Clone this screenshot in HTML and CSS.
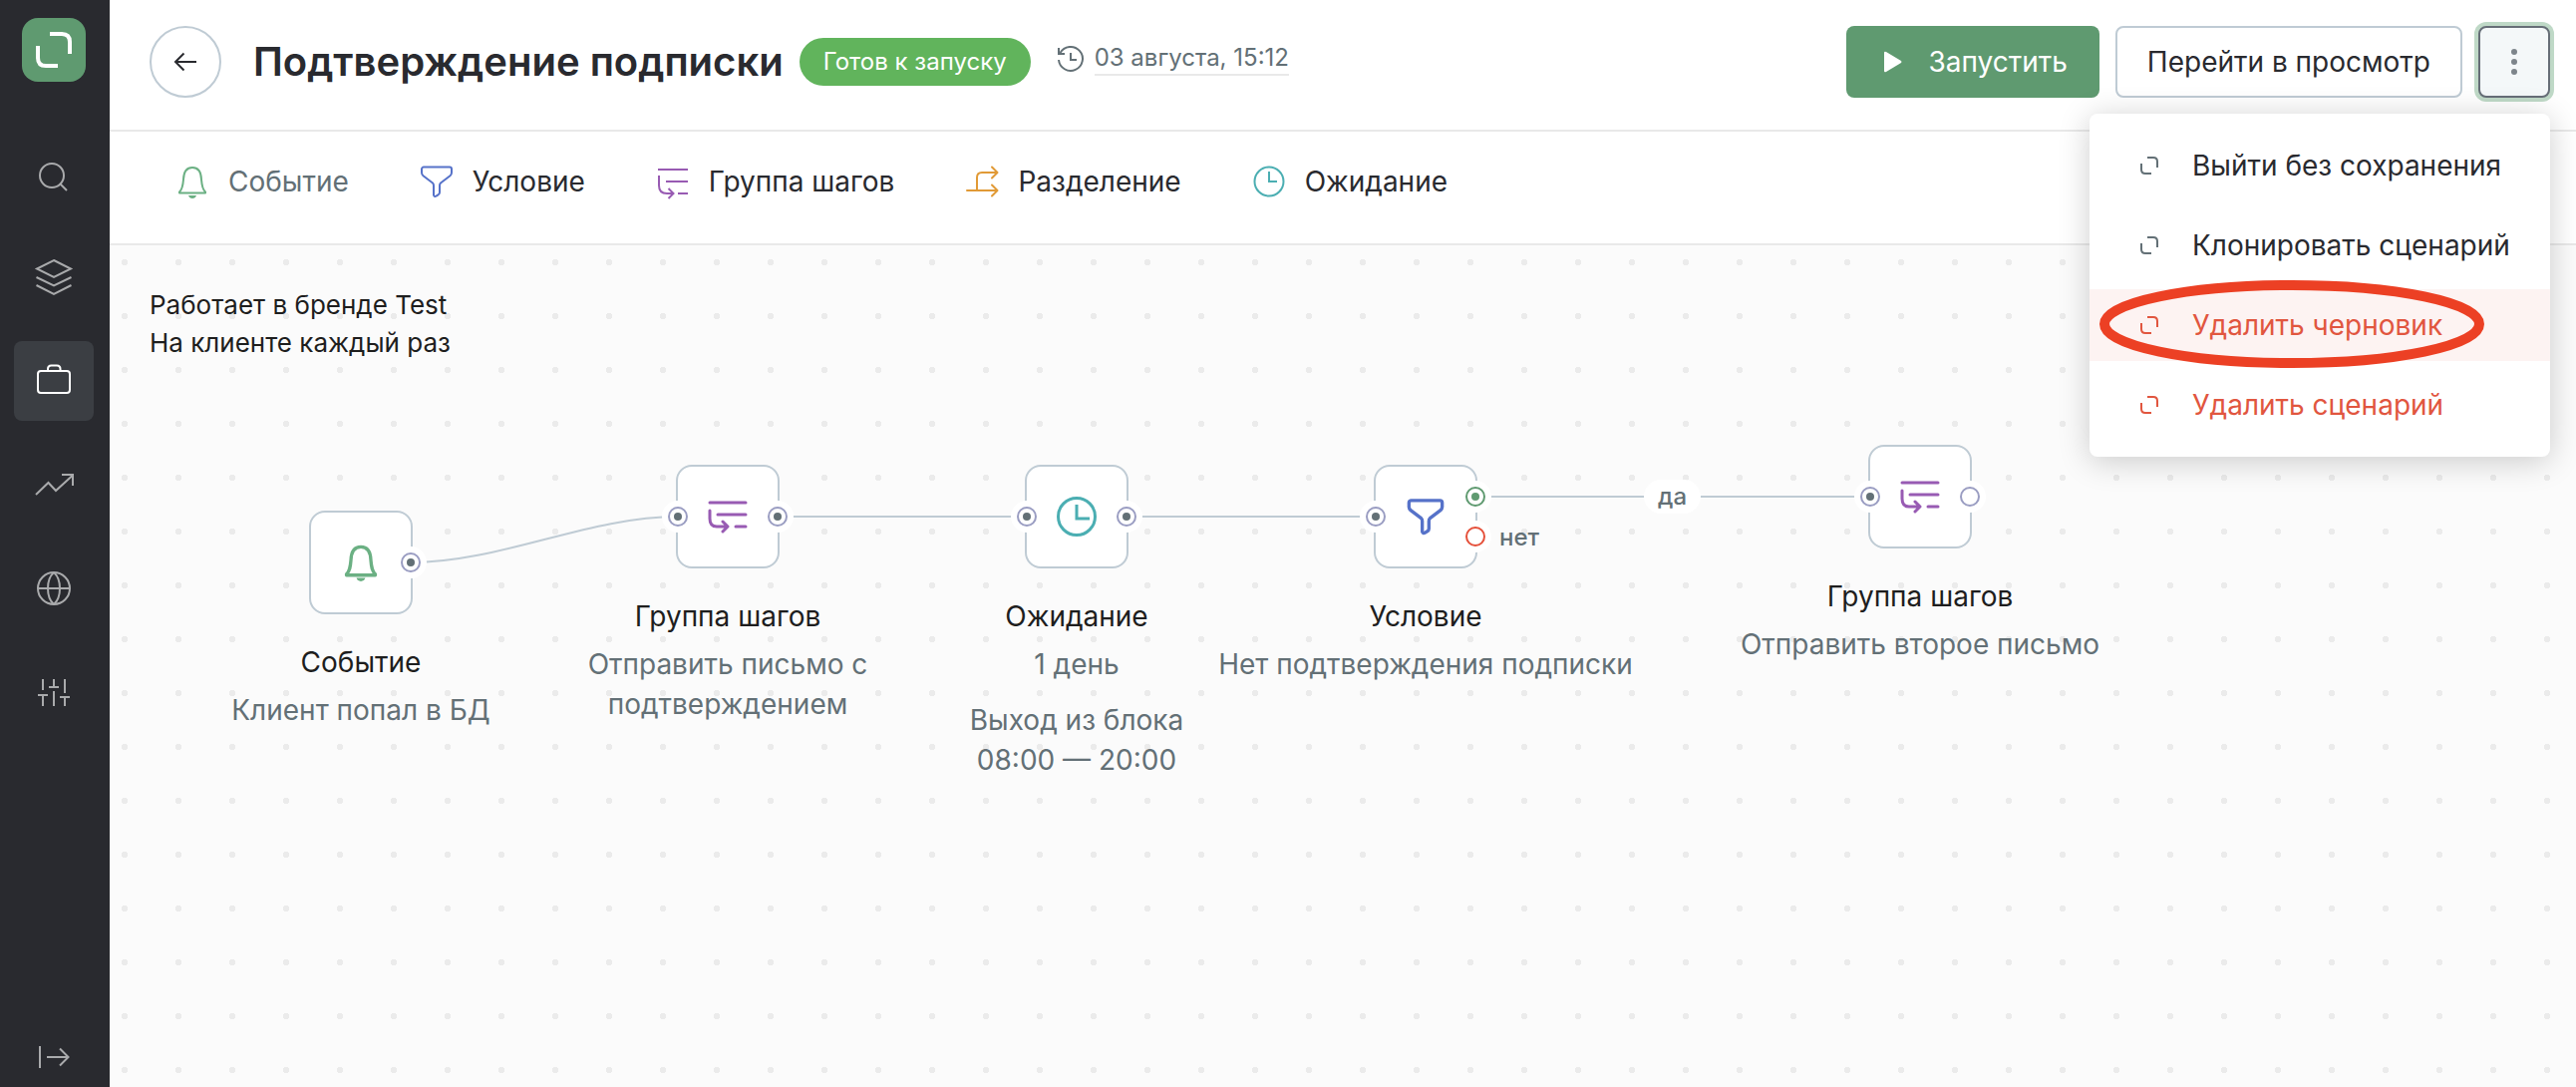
FILE: index.html
```html
<!DOCTYPE html>
<html lang="ru">
<head>
<meta charset="utf-8">
<title>Подтверждение подписки</title>
<meta name="viewport" content="width=device-width, initial-scale=1">
<link rel="stylesheet" href="styles.css">
</head>
<body>
<svg class="sprite" aria-hidden="true">
  <symbol id="i-bell" viewBox="0 0 36 36"><path d="M5 28.500 C8 26 8.500 22 9 16 C9.300 8 12 4 18 4 C24 4 26.700 8 27 16 C27.500 22 28 26 31 28.500 V29.500 H5 Z" fill="none" stroke="currentColor" stroke-linejoin="round"/><path d="M14 32 h8 c-.6 2 -2 3 -4 3 s-3.400 -1 -4 -3Z" fill="currentColor" stroke="none"/></symbol>
  <symbol id="i-funnel" viewBox="0 0 36 36"><path d="M5 3.500 H31 a2 2 0 0 1 2 2 V9 Q33 11 31.500 12.300 L22 19.500 Q21 20.500 21 22 V29 Q21 30.500 19.500 31.300 L17.500 32.600 Q15.500 33.500 15 31.500 V22 Q15 20.500 14 19.500 L4.500 12.300 Q3 11 3 9 V5.500 a2 2 0 0 1 2 -2Z" fill="none" stroke="currentColor" stroke-linejoin="round"/></symbol>
  <symbol id="i-group" viewBox="0 0 36 36"><path d="M3 6 H33 M11 18 H33 M23 30 H33 M4 12 V22 Q4 30 12 30 H18 M13.500 25 L18.500 30 L13.500 35" fill="none" stroke="currentColor"/></symbol>
  <symbol id="i-group-bold" viewBox="0 0 40 36"><path d="M2 4 H38 M10 16 H38 M28 28 H38 M2 12 V20 Q2 28 9 28 H19 M15 23 L20 28 L15 33" fill="none" stroke="currentColor" stroke-linecap="round" stroke-linejoin="round"/></symbol>
  <symbol id="i-split" viewBox="0 0 36 36"><path d="M3 27 H33 M13 27 V14 Q13 9 18 9 H33 M28 3.500 L33.500 9 L28 14.500 M28 21.500 L33.500 27 L28 32.500" fill="none" stroke="currentColor" stroke-linecap="round" stroke-linejoin="round"/></symbol>
  <symbol id="i-clock" viewBox="0 0 36 36"><circle cx="18" cy="18" r="14.500" fill="none" stroke="currentColor"/><path d="M18 8 V18 H26" fill="none" stroke="currentColor"/></symbol>
  <symbol id="i-clock-bold" viewBox="0 0 40 40"><circle cx="20" cy="20" r="18.500" fill="none" stroke="currentColor"/><path d="M20 8 V22 H33" fill="none" stroke="currentColor"/></symbol>
  <symbol id="i-corners" viewBox="0 0 18 18"><path d="M7 1 H13 Q17 1 17 5 V11 M1 7 V13 Q1 17 5 17 H11" fill="none" stroke="currentColor" stroke-width="2"/></symbol>
</svg>

<div class="app">
  <nav class="sidebar" aria-label="Главное меню">
    <a class="logo" href="#" aria-label="На главную">
      <svg viewBox="0 0 64 64"><path d="M28 16 H40 Q48 16 48 24 V36 M16 28 V40 Q16 48 24 48 H36" fill="none" stroke="currentColor" stroke-width="4"/></svg>
    </a>
    <div class="sidebar-links">
      <a class="side-link" href="#" aria-label="Поиск"><svg viewBox="0 0 40 40"><circle cx="18" cy="22" r="12" /><path d="M26 30 L33 37"/></svg></a>
      <a class="side-link" href="#" aria-label="Слои"><svg viewBox="0 0 40 40"><path d="M20 3 L37 11.500 L20 20 L3 11.500 Z M2.500 20 L20 28.500 L37.500 20 M2.500 28 L20 37 L37.500 28"/></svg></a>
      <a class="side-link side-link--active" href="#" aria-label="Кампании"><svg viewBox="0 0 40 40"><rect x="4" y="10" width="32" height="22" rx="3"/><path d="M14 10 V8 Q14 4.500 17.500 4.500 H23 Q26.500 4.500 26.500 8 V10"/></svg></a>
      <a class="side-link" href="#" aria-label="Отчёты"><svg viewBox="0 0 40 40"><path d="M2 30 L14.500 18 L22 26 L38.500 11 M28 10 H39 V21"/></svg></a>
      <a class="side-link" href="#" aria-label="Интеграции"><svg viewBox="0 0 40 40"><circle cx="20" cy="20" r="16"/><path d="M4 20 H36 M20 4 C12 11 12 29 20 36 M20 4 C28 11 28 29 20 36"/></svg></a>
      <a class="side-link" href="#" aria-label="Настройки"><svg viewBox="0 0 40 40"><path d="M9 7 V18 M4 23 H14 M9 23 V34 M20 7 V15 M15 15 H25 M20 19 V34 M31 7 V21 M26 25 H36 M31 25 V34"/></svg></a>
    </div>
    <a class="side-link side-link--expand" href="#" aria-label="Развернуть меню"><svg viewBox="0 0 40 40"><path d="M6 9 V31 M13 20 H34 M26 11.500 L34.500 20 L26 28.500"/></svg></a>
  </nav>

  <main class="main">
    <header class="header">
      <button class="back" type="button" aria-label="Назад"><svg viewBox="0 0 28 28"><path d="M25 14 H4 M12.500 5.500 L4 14 L12.500 22.500" fill="none" stroke="currentColor" stroke-width="2"/></svg></button>
      <h1 class="title">Подтверждение подписки</h1>
      <span class="status">Готов к запуску</span>
      <a class="history" href="#">
        <svg viewBox="0 0 28 28"><path d="M3.500 8 A12 12 0 1 1 2 15 M2 3 V9 H8 M14 8 V15 H20" fill="none" stroke="currentColor" stroke-width="2"/></svg>
        <span class="history-date">03 августа, 15:12</span>
      </a>
      <div class="actions">
        <button class="btn btn--primary" type="button"><svg viewBox="0 0 18 22"><path d="M0 2 Q0 0 2 1 L17 10 Q18 11 17 12 L2 21 Q0 22 0 20Z" fill="currentColor"/></svg>Запустить</button>
        <button class="btn btn--outline" type="button">Перейти в просмотр</button>
        <div class="more">
          <button class="btn more-toggle" type="button" aria-label="Ещё" aria-expanded="true"><svg viewBox="0 0 6 26"><circle cx="3" cy="3" r="3"/><circle cx="3" cy="13" r="3"/><circle cx="3" cy="23" r="3"/></svg></button>
          <div class="menu">
            <button class="menu-item" type="button"><svg class="menu-icon"><use href="#i-corners"/></svg>Выйти без сохранения</button>
            <button class="menu-item" type="button"><svg class="menu-icon"><use href="#i-corners"/></svg>Клонировать сценарий</button>
            <button class="menu-item menu-item--danger menu-item--hover" type="button"><svg class="menu-icon"><use href="#i-corners"/></svg>Удалить черновик<svg class="marker" viewBox="0 0 386 88" aria-hidden="true"><ellipse cx="193" cy="44" rx="188" ry="39" fill="none" stroke="currentColor" stroke-width="10"/></svg></button>
            <button class="menu-item menu-item--danger" type="button"><svg class="menu-icon"><use href="#i-corners"/></svg>Удалить сценарий</button>
          </div>
        </div>
      </div>
    </header>

    <div class="toolbar">
      <button class="tool tool--muted" type="button"><svg class="c-green"><use href="#i-bell"/></svg>Событие</button>
      <button class="tool" type="button"><svg class="c-blue"><use href="#i-funnel"/></svg>Условие</button>
      <button class="tool" type="button"><svg class="c-purple"><use href="#i-group"/></svg>Группа шагов</button>
      <button class="tool" type="button"><svg class="c-orange"><use href="#i-split"/></svg>Разделение</button>
      <button class="tool" type="button"><svg class="c-teal"><use href="#i-clock"/></svg>Ожидание</button>
    </div>

    <section class="canvas" aria-label="Сценарий">
      <p class="summary">Работает в бренде Test<br>На клиенте каждый раз</p>

      <svg class="edges" width="2000" height="400" aria-hidden="true">
        <path d="M302 318 C392 318 480 272 570 272 M670 272 H920 M1020 272 H1270 M1370 252 H1766"/>
      </svg>
      <span class="edge-label">да</span>

      <article class="node node--event">
        <div class="box"><svg class="c-green node-icon"><use href="#i-bell"/></svg><i class="port port--out port--linked"></i></div>
        <h2>Событие</h2>
        <p>Клиент попал в БД</p>
      </article>
      <article class="node node--confirm">
        <div class="box"><svg class="c-purple node-icon"><use href="#i-group-bold"/></svg><i class="port port--in port--linked"></i><i class="port port--out port--linked"></i></div>
        <h2>Группа шагов</h2>
        <p>Отправить письмо с<br>подтверждением</p>
      </article>
      <article class="node node--wait">
        <div class="box"><svg class="c-teal node-icon"><use href="#i-clock-bold"/></svg><i class="port port--in port--linked"></i><i class="port port--out port--linked"></i></div>
        <h2>Ожидание</h2>
        <p>1 день</p>
        <p class="spaced">Выход из блока<br>08:00 — 20:00</p>
      </article>
      <article class="node node--condition">
        <div class="box"><svg class="c-blue node-icon"><use href="#i-funnel"/></svg><i class="port port--in port--linked"></i><i class="port port--out port--yes port--linked"></i><i class="port port--out port--no"></i><span class="port-label">нет</span></div>
        <h2>Условие</h2>
        <p>Нет подтверждения подписки</p>
      </article>
      <article class="node node--second">
        <div class="box"><svg class="c-purple node-icon"><use href="#i-group-bold"/></svg><i class="port port--in port--linked"></i><i class="port port--out"></i></div>
        <h2>Группа шагов</h2>
        <p>Отправить второе письмо</p>
      </article>
    </section>
  </main>
</div>
</body>
</html>
```
FILE: styles.css
```css
:root {
  --ink: #292a2f;
  --muted: #637076;
  --line: #e9e9e9;
  --outline: #bfcbd4;
  --brand: #5f9a70;
  --danger: #e1563f;
}

* { box-sizing: border-box; }

body {
  margin: 0;
  font-family: Inter, "Liberation Sans", sans-serif;
  font-size: 28px;
  line-height: 40px;
  color: var(--ink);
  background: #fff;
}

button {
  font: inherit;
  color: inherit;
  background: none;
  border: 0;
  padding: 0;
  cursor: pointer;
}

a { color: inherit; text-decoration: none; }
h1, h2, p { margin: 0; font-weight: 400; }
svg { display: block; flex: none; overflow: visible; }
.sprite { position: absolute; width: 0; height: 0; }

.c-green { color: #6bb083; }
.c-blue { color: #5672c9; }
.c-purple { color: #985bb3; }
.c-orange { color: #e19a36; }
.c-teal { color: #4baeb2; }

.app { display: flex; min-height: 100vh; }

/* Sidebar */
.sidebar {
  display: flex;
  flex-direction: column;
  align-items: center;
  flex: none;
  width: 110px;
  padding: 18px 2px 0 0;
  background: var(--ink);
  color: #a9aaac;
}

.logo {
  width: 64px;
  height: 64px;
  border-radius: 16px;
  background: var(--brand);
  color: #fff;
}

.sidebar-links {
  display: flex;
  flex-direction: column;
  gap: 24px;
  margin-top: 52px;
}

.side-link {
  display: flex;
  align-items: center;
  justify-content: center;
  width: 80px;
  height: 80px;
  border-radius: 8px;
}

.side-link svg {
  width: 40px;
  height: 40px;
  fill: none;
  stroke: currentColor;
  stroke-width: 2;
}

.side-link--active { background: #3b3e43; color: #fff; }
.side-link--expand { height: 60px; margin-top: auto; }

/* Header */
.main { display: flex; flex-direction: column; flex: 1; min-width: 0; }

.header {
  display: flex;
  align-items: center;
  height: 132px;
  padding: 0 26px 6px 40px;
  border-bottom: 2px solid var(--line);
}

.back {
  display: flex;
  align-items: center;
  justify-content: center;
  width: 72px;
  height: 72px;
  border: 2px solid var(--outline);
  border-radius: 50%;
}

.back svg { width: 28px; height: 28px; }

.title {
  margin-left: 32px;
  font-size: 40px;
  line-height: 48px;
  font-weight: 600;
}

.status {
  margin-left: 16px;
  padding: 0 24px;
  border-radius: 24px;
  background: #61b45c;
  color: #fff;
  font-size: 24px;
  line-height: 48px;
}

.history {
  display: flex;
  align-items: center;
  gap: 10px;
  margin: 0 0 6px 26px;
  color: var(--muted);
  font-size: 24px;
  line-height: 32px;
}

.history svg { width: 28px; height: 28px; }
.history-date { border-bottom: 2px solid var(--line); }

.actions { display: flex; gap: 16px; margin-left: auto; }

.btn {
  display: flex;
  align-items: center;
  justify-content: center;
  height: 72px;
  padding: 0 30px;
  border-radius: 8px;
  white-space: nowrap;
}

.btn--primary { gap: 26px; padding: 0 32px 0 38px; background: var(--brand); color: #fff; }
.btn--primary svg { width: 18px; height: 22px; }
.btn--outline { border: 2px solid var(--outline); }

.more { position: relative; }

.more-toggle {
  width: 72px;
  padding: 0;
  border: 2px solid #666e77;
  background: #f4f8f9;
  box-shadow: 0 0 0 4px #bfd9c7;
}

.more-toggle svg { width: 6px; height: 26px; fill: #7d858b; }

.menu {
  position: absolute;
  z-index: 2;
  top: 88px;
  right: 0;
  display: flex;
  flex-direction: column;
  gap: 8px;
  width: 462px;
  padding: 16px 0;
  border-radius: 8px;
  background: #fff;
  box-shadow: 0 4px 32px rgba(0, 0, 0, 0.2);
}

.menu-item {
  position: relative;
  display: flex;
  align-items: center;
  gap: 34px;
  height: 72px;
  padding-left: 51px;
  white-space: nowrap;
}

.menu-icon { width: 18px; height: 18px; color: var(--muted); }
.menu-item--danger, .menu-item--danger .menu-icon { color: var(--danger); }
.menu-item--hover { background: #fdf3f2; }

.marker {
  position: absolute;
  top: -9px;
  left: 10px;
  width: 386px;
  height: 88px;
  color: #ec4024;
}

/* Toolbar */
.toolbar {
  display: flex;
  align-items: center;
  gap: 70px;
  height: 114px;
  padding: 0 65px 12px;
  border-bottom: 2px solid var(--line);
}

.tool { display: flex; align-items: center; gap: 18px; }
.tool svg { width: 36px; height: 36px; stroke-width: 2; }
.tool--muted { color: var(--muted); }

/* Canvas */
.canvas {
  position: relative;
  flex: 1;
  overflow: hidden;
  background: #fbfbfb radial-gradient(circle at 15px 17px, #ebebeb 3px, transparent 3px) 0 0 / 54px 54px;
}

.summary {
  padding: 41px 40px;
  font-size: 26px;
  line-height: 38px;
  color: #1e1e1e;
}

.edges {
  position: absolute;
  top: 0;
  left: 0;
  fill: none;
  stroke: var(--outline);
  stroke-width: 2;
}

.edge-label {
  position: absolute;
  left: 1539px;
  top: 235px;
  padding: 0 14px;
  border-radius: 17px;
  background: #fff;
  color: var(--muted);
  font-size: 24px;
  font-weight: 500;
  line-height: 34px;
}

.node {
  position: absolute;
  display: flex;
  flex-direction: column;
  align-items: center;
  width: 440px;
  text-align: center;
}

.node--event { left: 32px; top: 266px; }
.node--confirm { left: 400px; top: 220px; }
.node--wait { left: 750px; top: 220px; }
.node--condition { left: 1100px; top: 220px; }
.node--second { left: 1596px; top: 200px; }

.box {
  position: relative;
  display: flex;
  align-items: center;
  justify-content: center;
  width: 104px;
  height: 104px;
  margin-bottom: 28px;
  border: 2px solid var(--outline);
  border-radius: 16px;
  background: #fff;
}

.node-icon { width: 40px; height: 40px; stroke-width: 3; }

.node h2 { margin-bottom: 8px; font-size: 28px; line-height: 40px; color: #1e1e1e; }
.node p { color: var(--muted); }
.node .spaced { margin-top: 16px; }

.port {
  position: absolute;
  top: 34px;
  width: 32px;
  height: 32px;
  border: 6px solid #fff;
  border-radius: 50%;
  background: #fff;
  color: var(--muted);
}

.port::before {
  content: "";
  position: absolute;
  inset: 0;
  border: 2px solid #9a9dc2;
  border-radius: 50%;
}

.port--linked::after {
  content: "";
  position: absolute;
  inset: 6px;
  border-radius: 50%;
  background: currentColor;
}

.port--in { left: -16px; }
.port--out { right: -16px; }
.port--yes { top: 14px; color: var(--brand); }
.port--yes::before { border-color: currentColor; }
.port--no { top: 54px; color: #e5503a; }
.port--no::before { border-color: currentColor; }

.port-label {
  position: absolute;
  top: 54px;
  left: 124px;
  color: var(--muted);
  font-size: 24px;
  font-weight: 500;
  line-height: 34px;
}
```
